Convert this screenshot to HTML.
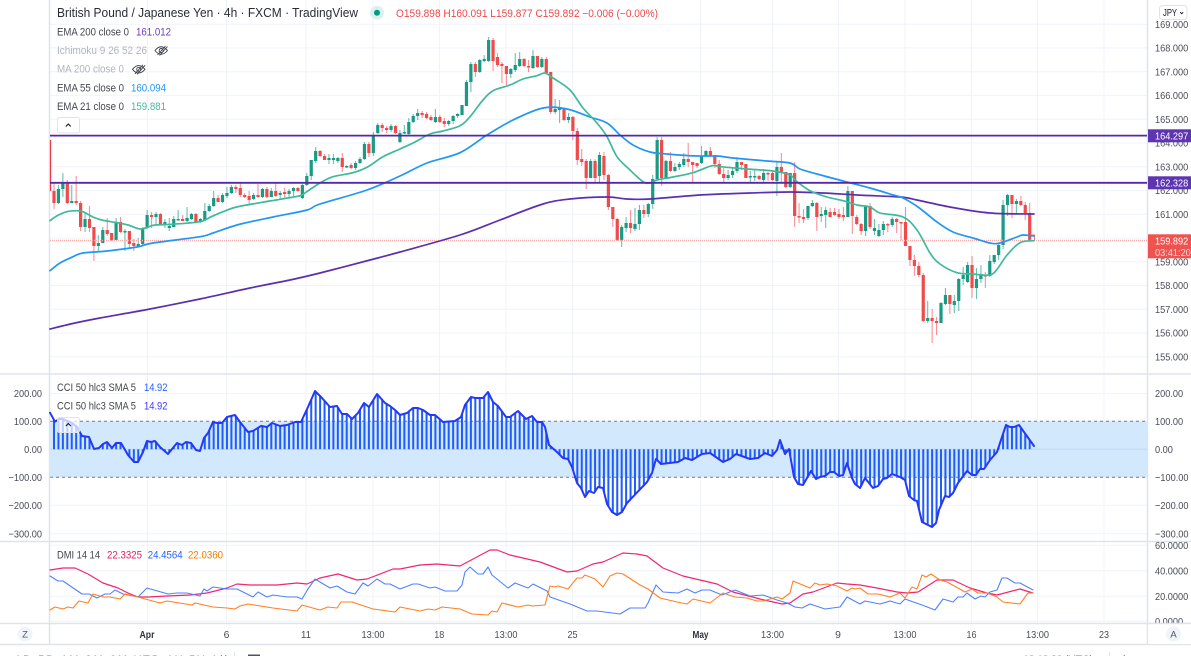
<!DOCTYPE html>
<html><head><meta charset="utf-8"><title>GBPJPY</title>
<style>
html,body{margin:0;padding:0;background:#fff;width:1191px;height:656px;overflow:hidden}
svg{display:block;font-family:"Liberation Sans",sans-serif}
.t{font-size:10.4px;fill:#4a4d57}
.l{font-size:10.6px;fill:#44474f}
.m{font-size:10.6px;fill:#b2b5be}
.ln{fill:none;stroke-linejoin:round;stroke-linecap:round}
</style></head><body>
<svg id="c" width="1191" height="656" viewBox="0 0 1191 656" xmlns="http://www.w3.org/2000/svg">
<rect width="1191" height="656" fill="#fff"/>
<!-- grid -->
<path fill="none" stroke="#f0f3fa" d="M50 24.2H1147M50 47.9H1147M50 71.7H1147M50 95.4H1147M50 119.2H1147M50 143H1147M50 166.7H1147M50 190.5H1147M50 214.2H1147M50 238H1147M50 261.7H1147M50 285.5H1147M50 309.2H1147M50 333H1147M50 356.7H1147M50 393.5H1147M50 421.3H1147M50 449.3H1147M50 477.3H1147M50 505.3H1147M50 533.7H1147M50 545.3H1147M50 570.7H1147M50 596.3H1147M50 621.3H1147M147.5 0V623M226.5 0V623M306 0V623M373 0V623M439.5 0V623M506 0V623M572.5 0V623M700.5 0V623M772.5 0V623M838.5 0V623M905 0V623M971.5 0V623M1037.5 0V623M1104 0V623"/>
<!-- CCI band -->
<rect x="50" y="421.3" width="1097" height="56" fill="#d1e8fd"/>
<path d="M50 421.3H1147M50 477.3H1147" stroke="#787b86" stroke-dasharray="3 3" fill="none"/>
<path d="M50 449.3H1147" stroke="#bcd9f5" fill="none"/>
<!-- panes -->
<path fill="none" stroke="#e0e3eb" stroke-width="1.5" d="M49.5 0V644.5M1147.5 0V644.5M0 374H1191M0 541.5H1191M0 623.5H1191M0 644.5H1191"/>
<path fill="none" stroke="#e0e3eb" d="M234.5 652V656M1109.5 652V656"/>
<!-- candles -->
<path id="wg" fill="none" stroke="#089981" stroke-opacity=".6" stroke-width="1.1"/>
<path id="wr" fill="none" stroke="#f23645" stroke-opacity=".55" stroke-width="1.1"/>
<path id="bg" fill="none" stroke="#189a85" stroke-width="3.2"/>
<path id="br" fill="none" stroke="#f04a4a" stroke-width="3.2"/>
<rect x="1029" y="235" width="5.5" height="6" fill="none" stroke="#f04a4a" stroke-width=".8"/>
<path d="M50 240.5H1147" stroke="#f7a9a7" stroke-width="1.4" stroke-dasharray="1 1" fill="none"/>
<path d="M50.5 140V191" stroke="#f23645" stroke-width="1.2" fill="none"/>
<!-- EMA 200 -->
<polyline class="ln sm" stroke="#5b2fae" stroke-width="1.7" points="50,329 75,323 100,318 150,309 200,299 250,288 290,280 320,273 370,260 400,252 460,235 500,220 543,204 570,199 607,197 627,199 650,199 700,195 750,193 790,192 823,193 857,195 900,197 917,200 950,207 990,213 1034,214"/>
<!-- EMA 55 -->
<polyline class="ln sm" stroke="#2196f3" stroke-width="1.7" points="50,270.7 60,263 73,256.7 83,253 107,251 137,247 153,243 200,236.7 213,233 237,225 273,217 307,210 320,204 367,190 400,176 427,163 460,152.7 487,135 513,120 543,108 567,109 590,117 607,123 620,135 633,145 650,152 667,154 697,156 717,156 733,158 767,161 790,163 800,169 817,174 847,182 870,188 890,194 903,198 918,207 937,222 953,232 973,238 990,243 1000,243 1017,237 1023,235 1034,236"/>
<!-- EMA 21 -->
<polyline class="ln sm" stroke="#3fb99b" stroke-width="1.7" points="50,220.7 56.7,216 66.7,211.7 76.7,210.7 83,211.7 93,217 101.7,220 116.7,222.7 128,225 140,229 148,227 155,225 171.7,224.3 200,221.7 210,217.3 223,211.7 236.7,207 260,202.7 280,199.3 300,195.7 306.7,191.7 320,183 333,176.7 353,172.7 368,166.7 383,156.7 400,149 413,143 430,134 443,131 460,125.7 470,116.7 483,100 493,90.7 510,85 523,79 537,75.7 545,73 553,78 570,90 583,108 597,123 607,136.7 617,156.7 630,170 643,181.7 650,183 657,180 673,177 693,172.7 712,165.7 720,166.7 747,169 773,171 790,175 797,181.7 810,190.7 827,197 843,200.7 857,205 870,207 880,213 903,217 917,230 930,253 940,264 957,272.7 973,274 990,275 998,268 1007,255 1020,242.7 1034,240.7"/>
<!-- horizontal levels -->
<path d="M50 135.6H1147M50 182.8H1147" stroke="#5527ab" stroke-width="1.8" fill="none"/>
<!-- CCI -->
<path id="st" fill="none" stroke="#1f5cff" stroke-width="2"/>
<polyline id="cci" class="ln" stroke="#2438f5" stroke-width="2" points="50,412.7 55,421.7 59,419 63,419 72,423 77,427 82,436 89,437 94,449 99,448 103,444 107,442 112,448 116,443 121,443 128,455 134,462 138,462 143,452 147,441 151,442 155,441 160,447 168,454 177,443 182,445 186,442 191,443 196,450 200,451 204,438 208,433 213,422 217,423 222,423 227,417 235,415 240,422 248,432 253,431 261,426 267,427 272,423 280,426 287,425 295,422 301,422 308,407 315,391 322,398 330,407 337,406 342,414 347,414 352,419 358,413 364,403 369,407 377,394 385,403 390,406 395,410 400,415 407,413 413,408 418,408 423,410 430,415 435,415 443,422 455,421 461,417 465,405 471,397 475,398 483,398 488,392 493,402 498,406 506,417 510,417 518,411 526,419 532,416 537,422 542,422 545,427 549,445 557,452 563,458 568,459 572,467 577,483 581,488 585,497 589,491 594,493 598,487 603,488 607,504 612,512 617,515 622,512 627,503 647,482 652,473 656,459 661,464 678,462 685,458 692,460 702,454 710,453 723,462 730,459 736,454 750,459 758,458 765,453 772,456 777,450 780,440 785,454 789,449 794,477 798,484 803,485 811,471 816,479 820,477 825,476 830,472 834,472 839,476 843,475 847,463 852,478 855,484 860,488 865,478 873,488 878,486 883,479 887,478 892,474 900,477 905,480 909,496 914,500 917,501 922,522 932,527 936,523 939,510 945,496 949,497 953,493 958,483 967,471 972,475 976,475 980,469 984,469 990,460 997,452 1002,437 1006,425 1010,427 1014,427 1019,425 1024,432 1034,446"/>
<!-- DMI -->
<polyline class="ln" stroke="#f0266f" stroke-width="1.2" points="50,570 63,568 75,568 88,574 103,583 118,588 128,593 138,597 148,597 167,596 190,595 207,593 227,588 237,584 250,585 277,585 297,583 307,584 320,578 338,574 357,580 367,579 393,569 400,569 420,565 437,564 460,566 490,550 497,550 510,555 540,562 567,572 577,571 593,564 603,562 623,553 637,554 647,556 663,568 683,576 700,580 717,584 733,592 760,599 782,604 790,603 803,594 813,592 837,583 847,584 860,585 877,588 897,592 907,593 918,592 937,580 953,580 970,588 987,593 997,595 1020,589 1033,593"/>
<polyline class="ln" stroke="#5082ff" stroke-width="1.1" points="50,576 58,581 63,581 82,594 89,594 97,598 105,594 110,594 115,590 123,594 138,597 147,588 168,594 177,593 182,593 187,593 200,596 204,589 207,591 213,587 227,589 237,589 253,597 258,592 267,597 273,595 287,597 297,597 302,599 308,589 315,579 330,588 337,586 347,592 355,594 363,583 368,586 377,579 385,584 390,584 400,589 413,584 418,584 430,588 435,587 445,591 457,591 462,585 465,572 470,567 478,574 483,574 488,567 492,575 508,588 515,583 528,588 533,584 547,591 550,597 570,604 587,611 597,611 620,614 630,608 645,608 648,603 656,585 663,592 678,593 687,589 695,593 702,590 710,590 722,595 735,590 750,596 763,595 777,600 787,603 795,607 802,608 810,604 825,609 840,607 847,597 860,604 865,601 880,604 890,601 900,604 905,599 922,605 935,610 943,599 953,602 958,597 963,597 967,593 975,599 981,596 985,597 990,592 997,590 1002,578 1007,578 1015,583 1020,583 1033,590"/>
<polyline class="ln" stroke="#ff8026" stroke-width="1.1" points="50,610 55,607 63,609 68,607 73,608 79,601 88,603 93,594 103,597 110,597 120,599 125,594 138,597 160,603 167,601 192,605 195,603 213,607 227,608 235,609 240,606 248,604 273,608 297,611 302,605 320,610 328,607 337,608 341,602 352,602 373,609 395,612 400,607 420,611 428,609 435,610 442,607 460,609 472,614 488,615 492,611 497,612 502,603 518,607 528,605 532,606 545,605 550,586 555,587 558,586 568,589 577,578 582,578 585,575 595,579 603,587 610,576 617,573 623,574 640,585 648,589 660,598 677,602 687,604 693,599 710,603 723,593 735,597 747,598 757,601 763,601 777,597 782,599 790,593 793,581 810,588 815,583 820,585 827,584 837,586 847,591 852,588 855,589 860,588 868,594 878,594 890,597 900,593 905,598 912,587 917,589 922,575 926,577 931,574 940,580 947,582 958,588 965,592 972,589 978,593 987,593 997,597 1003,602 1020,604 1028,593 1033,593"/>

<!-- right axis labels -->
<g class="t" transform="translate(1155 0) scale(.885 1)">
<text y="27.8">169.000</text><text y="51.5">168.000</text><text y="75.3">167.000</text><text y="99">166.000</text><text y="122.8">165.000</text><text y="146.6">164.000</text><text y="170.3">163.000</text><text y="194.1">162.000</text><text y="217.8">161.000</text><text y="241.6">160.000</text><text y="265.3">159.000</text><text y="289.1">158.000</text><text y="312.8">157.000</text><text y="336.6">156.000</text><text y="360.3">155.000</text>
<text y="397.1">200.00</text><text y="424.9">100.00</text><text y="452.9">0.00</text><text y="480.9">−100.00</text><text y="508.9">−200.00</text><text y="537.3">−300.00</text>
<text y="548.9">60.0000</text><text y="574.3">40.0000</text><text y="599.9">20.0000</text><text y="624.9">0.0000</text>
</g>
<rect x="1148" y="623.4" width="43" height="20.5" fill="#fff"/>
<path fill="none" stroke="#e0e3eb" stroke-width="1.5" d="M1147 623.5H1191"/>
<!-- left CCI labels -->
<g class="t" text-anchor="end" transform="translate(42 0) scale(.885 1)">
<text y="397.1">200.00</text><text y="424.9">100.00</text><text y="452.9">0.00</text><text y="480.9">−100.00</text><text y="508.9">−200.00</text><text y="537.3">−300.00</text>
</g>
<!-- price tags -->
<rect x="1148" y="129.3" width="43" height="13" fill="#5e35b1"/>
<rect x="1148" y="176.3" width="43" height="13" fill="#5e35b1"/>
<rect x="1148" y="234.3" width="43" height="24" fill="#ef5350"/>
<g font-size="10.4" fill="#fff" transform="translate(1155 0) scale(.885 1)">
<text y="139.4">164.297</text><text y="186.4">162.328</text><text y="244.4">159.892</text>
<text y="256.2" fill="#ffd6d3">03:41:20</text>
</g>
<!-- JPY button -->
<rect x="1159.5" y="5.5" width="27.5" height="14" rx="3" fill="#fff" stroke="#e0e3eb"/>
<text x="1163" y="16" font-size="10.4" fill="#131722" textLength="14" lengthAdjust="spacingAndGlyphs">JPY</text>
<path d="M1180.2 12.2l1.5 1.5 1.5-1.5" fill="none" stroke="#131722" stroke-width=".9"/>
<!-- legend -->
<text x="57" y="17" font-size="12.6" fill="#2a2d37" textLength="301" lengthAdjust="spacingAndGlyphs">British Pound / Japanese Yen · 4h · FXCM · TradingView</text>
<circle cx="377" cy="12.7" r="7" fill="#dbf1ed"/><circle cx="377" cy="12.7" r="3" fill="#089981"/>
<text x="396" y="17" font-size="10.6" fill="#f0474a" textLength="262" lengthAdjust="spacingAndGlyphs">O159.898 H160.091 L159.877 C159.892 −0.006 (−0.00%)</text>
<text class="l" x="57" y="35.3" textLength="72" lengthAdjust="spacingAndGlyphs">EMA 200 close 0</text>
<text x="136" y="35.3" font-size="10.6" fill="#6a3dc0" textLength="35" lengthAdjust="spacingAndGlyphs">161.012</text>
<text class="m" x="57" y="53.9" textLength="90" lengthAdjust="spacingAndGlyphs">Ichimoku 9 26 52 26</text>
<text class="m" x="57" y="72.6" textLength="67" lengthAdjust="spacingAndGlyphs">MA 200 close 0</text>
<text class="l" x="57" y="91.3" textLength="67" lengthAdjust="spacingAndGlyphs">EMA 55 close 0</text>
<text x="131" y="91.3" font-size="10.6" fill="#2196f3" textLength="35" lengthAdjust="spacingAndGlyphs">160.094</text>
<text class="l" x="57" y="110" textLength="67" lengthAdjust="spacingAndGlyphs">EMA 21 close 0</text>
<text x="131" y="110" font-size="10.6" fill="#45b8a0" textLength="35" lengthAdjust="spacingAndGlyphs">159.881</text>
<g fill="none" stroke="#3a3d47" stroke-width=".9">
<path d="M155 50.5q6-7.5 12.5 0q-6.5 7.5-12.5 0z"/><circle cx="161.2" cy="50.5" r="2"/><path d="M157.5 55l8-9M159.5 55.5l8-9"/>
<path d="M132.5 69.3q6-7.5 12.5 0q-6.5 7.5-12.5 0z"/><circle cx="138.7" cy="69.3" r="2"/><path d="M135 73.8l8-9M137 74.3l8-9"/>
</g>
<rect x="57.5" y="117.5" width="22" height="15.5" rx="2" fill="#fff" stroke="#e0e3eb"/>
<path d="M65.8 126.5l2.5-2.5 2.5 2.5" fill="none" stroke="#131722" stroke-width="1.1"/>
<!-- CCI legend -->
<text class="l" x="57" y="390.9" textLength="79" lengthAdjust="spacingAndGlyphs">CCI 50 hlc3 SMA 5</text>
<text x="144" y="390.9" font-size="10.6" fill="#2962ff" textLength="23.5" lengthAdjust="spacingAndGlyphs">14.92</text>
<text class="l" x="57" y="409.6" textLength="79" lengthAdjust="spacingAndGlyphs">CCI 50 hlc3 SMA 5</text>
<text x="144" y="409.6" font-size="10.6" fill="#3f3dff" textLength="23.5" lengthAdjust="spacingAndGlyphs">14.92</text>
<rect x="57.5" y="417.5" width="22" height="15" rx="2" fill="#fff" fill-opacity=".72" stroke="#e0e3eb"/>
<path d="M65.8 426l2.5-2.5 2.5 2.5" fill="none" stroke="#131722" stroke-width="1.1"/>
<!-- DMI legend -->
<text class="l" x="57" y="558.3" textLength="43" lengthAdjust="spacingAndGlyphs">DMI 14 14</text>
<text x="107" y="558.3" font-size="10.6" fill="#e91e63" textLength="35" lengthAdjust="spacingAndGlyphs">22.3325</text>
<text x="147.7" y="558.3" font-size="10.6" fill="#2962ff" textLength="35" lengthAdjust="spacingAndGlyphs">24.4564</text>
<text x="188" y="558.3" font-size="10.6" fill="#f57c00" textLength="35" lengthAdjust="spacingAndGlyphs">22.0360</text>
<!-- time axis -->
<g class="t" text-anchor="middle">
<text x="147" y="638" font-weight="bold" fill="#2f323c" textLength="15" lengthAdjust="spacingAndGlyphs">Apr</text>
<text x="226.5" y="638">6</text><text x="306" y="638" textLength="10" lengthAdjust="spacingAndGlyphs">11</text>
<text x="373" y="638" textLength="23" lengthAdjust="spacingAndGlyphs">13:00</text>
<text x="439.3" y="638" textLength="10" lengthAdjust="spacingAndGlyphs">18</text>
<text x="506" y="638" textLength="23" lengthAdjust="spacingAndGlyphs">13:00</text>
<text x="572.5" y="638" textLength="10" lengthAdjust="spacingAndGlyphs">25</text>
<text x="700.5" y="638" font-weight="bold" fill="#2f323c" textLength="16" lengthAdjust="spacingAndGlyphs">May</text>
<text x="772.5" y="638" textLength="23" lengthAdjust="spacingAndGlyphs">13:00</text>
<text x="838" y="638">9</text>
<text x="905" y="638" textLength="23" lengthAdjust="spacingAndGlyphs">13:00</text>
<text x="971.5" y="638" textLength="10" lengthAdjust="spacingAndGlyphs">16</text>
<text x="1037.5" y="638" textLength="23" lengthAdjust="spacingAndGlyphs">13:00</text>
<text x="1104" y="638" textLength="10" lengthAdjust="spacingAndGlyphs">23</text>
</g>
<circle cx="25" cy="634" r="7.5" fill="#f0f3fa"/><text x="25" y="637.5" font-size="9.5" fill="#50535e" text-anchor="middle">Z</text>
<circle cx="1173.5" cy="634" r="7.5" fill="#f0f3fa"/><text x="1173.5" y="637.5" font-size="9.5" fill="#50535e" text-anchor="middle">A</text>
<!-- footer (cut off) -->
<text x="15" y="663" font-size="11" fill="#777a84" textLength="212">1D 5D 1M 3M 6M YTD 1Y 5Y All</text>
<text x="1023" y="663" font-size="11" fill="#777a84" textLength="70">13:18:39 (UTC)</text>
<text x="1123" y="663" font-size="11" fill="#777a84" textLength="20">log</text>
<rect x="248" y="654.5" width="12" height="2" fill="#50535e"/>
</svg>
<script>
var d="r183,191,203,209 g185,189,203,204 g173,183,189,197 r180,183,203,204 g185,201,203,203 r176,201,203,205 r201,203,227,231 g212,219,227,232 r206,219,228,232 r227,227,246,261 g235,243,246,252 g227,230,243,243 r218,230,234,236 r233,233,240,241 g218,222,240,240 r217,222,232,233 g229,231,232,251 r231,231,244,249 r239,243,246,251 g238,244,246,247 g227,228,244,245 g210,215,228,229 r212,215,217,228 g212,214,217,225 r213,214,224,224 g219,222,224,228 g218,226,228,231 g216,219,227,227 g210,219,220,220 r215,219,221,221 g207,218,221,222 g213,214,219,220 r213,214,222,222 g218,219,222,223 g203,211,220,221 g204,206,211,212 g191,198,206,207 r195,198,202,202 g193,195,202,203 g187,193,196,198 g185,187,193,194 r185,187,189,193 r183,188,195,197 r193,195,197,198 r191,196,200,204 g193,195,199,200 r184,195,197,198 g188,189,197,198 r187,189,197,198 g188,191,197,197 r183,191,196,197 g191,193,195,199 r188,192,194,198 g189,191,194,198 g187,188,191,196 r187,188,191,192 g184,185,198,199 g173,176,185,186 g160,160,176,180 g147,151,161,163 r150,151,156,157 r154,156,160,160 g154,158,160,164 g154,158,160,164 g157,158,161,163 r153,158,167,172 g165,166,167,168 r163,165,168,169 g161,163,168,170 g157,159,163,164 g142,144,159,160 r142,144,153,157 g132,136,153,156 g123,125,133,134 r123,125,128,132 r126,128,130,133 g124,126,130,132 r125,126,133,134 g130,133,142,143 g125,132,133,134 g118,122,134,135 g114,116,122,123 g109,113,116,120 r111,113,115,118 r112,114,118,119 r115,117,120,121 g109,117,122,123 r115,117,122,123 r118,121,124,127 g120,121,124,126 g115,116,121,124 g113,114,116,118 g105,105,115,115 g80,82,106,106 g62,64,82,92 r62,64,72,77 g59,60,72,73 g55,59,61,62 g37,40,61,62 r38,40,61,71 r53,57,65,67 r62,64,66,83 r66,66,74,85 g68,69,74,78 g53,65,70,72 g52,59,66,67 r58,59,66,67 r60,66,67,72 g50,56,68,69 r56,56,67,68 g57,59,67,68 r57,59,73,73 r72,72,112,114 g99,109,112,114 g100,108,110,123 r108,108,120,121 g113,117,120,123 r116,117,131,140 r128,131,160,165 r149,159,162,166 r159,161,178,189 g159,161,178,178 r159,161,178,183 g152,155,176,183 r152,156,175,180 r174,175,207,210 r207,207,219,227 r218,219,240,241 g225,227,240,247 g217,223,228,232 r210,223,228,233 g208,224,229,231 g205,210,224,230 r205,210,214,218 g203,204,214,217 g175,179,204,209 g137,140,179,180 r137,140,178,186 g160,161,178,179 r152,161,171,172 g163,167,171,172 g162,164,167,170 g153,159,165,167 r143,159,162,167 r162,162,165,182 r163,163,166,168 g146,156,163,164 g150,151,156,157 r147,151,156,157 r155,155,164,168 r160,164,174,175 r168,174,178,182 g170,175,178,180 g167,171,175,178 g157,162,171,173 r162,162,165,170 r164,164,178,178 g171,176,177,182 g170,176,177,181 r175,176,179,180 g169,173,180,183 r172,173,174,181 r172,173,180,181 g162,167,181,196 r153,167,172,182 r172,172,187,188 g173,173,187,188 r162,173,216,227 r203,216,217,223 r209,217,219,223 g206,206,218,220 g200,203,206,207 r202,203,217,231 g207,214,216,222 g207,210,215,228 r208,212,217,217 r208,212,215,216 r209,214,217,219 r207,215,217,221 g186,191,217,217 r191,191,216,234 r215,217,224,225 r223,224,231,235 g205,206,231,236 r203,206,227,229 g219,228,231,235 g224,230,236,237 g221,224,230,235 r223,224,225,232 g217,219,225,227 r218,219,222,233 r222,222,223,240 r207,222,246,246 r246,246,260,266 r255,260,266,276 r262,266,275,277 r273,275,321,322 g301,318,321,323 r309,318,321,343 r317,321,323,335 g302,303,323,323 g288,295,304,305 r295,295,304,314 g295,301,305,313 g278,279,301,311 g267,275,279,285 g262,265,282,283 r256,265,288,298 g268,279,288,299 g265,274,279,283 r272,275,276,288 g255,261,276,277 g255,255,262,264 g243,245,255,260 g200,205,245,249 g194,195,205,216 r195,195,204,218 g199,201,204,213 r196,201,205,206 r202,205,213,220 r203,213,241,241".split(" ");
var p={wg:"",wr:"",bg:"",br:""};
d.forEach(function(s,i){var c=s[0],v=s.slice(1).split(",").map(Number),x=+(54+4.435*i).toFixed(2);
p["w"+c]+="M"+x+" "+v[0]+"V"+v[3];p["b"+c]+="M"+x+" "+v[1]+"V"+Math.max(v[2],v[1]+1.5);});
for(var k in p)document.getElementById(k).setAttribute("d",p[k]);
var pts=document.getElementById("cci").getAttribute("points").split(" ").map(function(s){return s.split(",").map(Number)}),st="";
for(var i=0;i<222;i++){var x=54+4.435*i;if(x>1034)break;var j=0;while(j<pts.length-2&&pts[j+1][0]<x)j++;
var a=pts[j],b=pts[j+1],y=a[1]+(b[1]-a[1])*(x-a[0])/(b[0]-a[0]);st+="M"+x.toFixed(2)+" 449.3V"+y.toFixed(1);}
document.getElementById("st").setAttribute("d",st);
/* smooth the moving averages */
document.querySelectorAll("polyline.sm").forEach(function(e){
var q=e.getAttribute("points").split(" ").map(function(s){return s.split(",").map(Number)}),s="M"+q[0];
for(var i=0;i<q.length-1;i++){var a=q[Math.max(i-1,0)],b=q[i],c=q[i+1],f=q[Math.min(i+2,q.length-1)];
s+="C"+(b[0]+(c[0]-a[0])/6).toFixed(1)+" "+(b[1]+(c[1]-a[1])/6).toFixed(1)+" "+(c[0]-(f[0]-b[0])/6).toFixed(1)+" "+(c[1]-(f[1]-b[1])/6).toFixed(1)+" "+c[0]+" "+c[1];}
var n=document.createElementNS("http://www.w3.org/2000/svg","path");
n.setAttribute("d",s);n.setAttribute("class","ln");n.setAttribute("stroke",e.getAttribute("stroke"));n.setAttribute("stroke-width",e.getAttribute("stroke-width"));
e.parentNode.replaceChild(n,e);});
</script>
</body></html>
